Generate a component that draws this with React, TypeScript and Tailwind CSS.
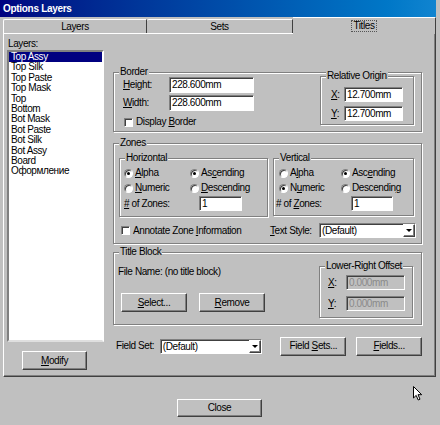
import type { ReactNode } from 'react';

const font = "font-['Liberation_Sans',Arial,sans-serif] text-[10px] tracking-[-0.4px] leading-[12px] text-black";
const sunken = 'border border-t-[#808080] border-l-[#808080] border-r-white border-b-white shadow-[inset_1px_1px_0_#404040]';
const raised = 'border border-t-white border-l-white border-r-[#404040] border-b-[#404040] shadow-[inset_-1px_-1px_0_#808080]';

const layers = ['Top Assy', 'Top Silk', 'Top Paste', 'Top Mask', 'Top', 'Bottom', 'Bot Mask', 'Bot Paste', 'Bot Silk', 'Bot Assy', 'Board', 'Оформление'];

function U({ children }: { children: ReactNode }) {
  return <span className="underline underline-offset-[1px]">{children}</span>;
}

function Group({ label, className, children }: { label: string; className?: string; children?: ReactNode }) {
  return (
    <div className={`relative border border-[#808080] shadow-[1px_1px_0_#fff,inset_1px_1px_0_#fff] ${className ?? ''}`}>
      <span className="absolute -top-[7px] left-[5px] bg-[#c0c0c0] px-[1px]">{label}</span>
      {children}
    </div>
  );
}

function Field({ value, className, disabled }: { value: string; className?: string; disabled?: boolean }) {
  return (
    <div className={`flex items-center pl-[2px] ${sunken} ${disabled ? 'bg-[#c0c0c0] text-[#8a8a8a]' : 'bg-white'} ${className ?? ''}`}>
      {value}
    </div>
  );
}

function Btn({ children, className }: { children: ReactNode; className?: string }) {
  return (
    <div className={`flex items-center justify-center bg-[#c0c0c0] ${raised} ${className ?? ''}`}>
      <span>{children}</span>
    </div>
  );
}

function Combo({ value, className }: { value: string; className?: string }) {
  return (
    <div className={`flex h-[15px] bg-white ${sunken} ${className ?? ''}`}>
      <span className="flex-1 pl-[2px] leading-[13px]">{value}</span>
      <div className={`w-[12px] h-[13px] flex items-center justify-center ${raised}`}>
        <div className="w-0 h-0 border-l-[3px] border-r-[3px] border-t-[3px] border-l-transparent border-r-transparent border-t-black" />
      </div>
    </div>
  );
}

function Radio({ checked, children, className }: { checked?: boolean; children: ReactNode; className?: string }) {
  return (
    <div className={`flex items-center h-[10px] ${className ?? ''}`}>
      <div className={`w-[9px] h-[9px] rounded-full bg-white flex items-center justify-center ${sunken}`}>
        {checked && <div className="w-[3px] h-[3px] rounded-full bg-black" />}
      </div>
      <span className="ml-[2px]">{children}</span>
    </div>
  );
}

function Check({ children, className }: { children: ReactNode; className?: string }) {
  return (
    <div className={`flex items-center h-[10px] ${className ?? ''}`}>
      <div className={`w-[9px] h-[9px] bg-white ${sunken}`} />
      <span className="ml-[3px]">{children}</span>
    </div>
  );
}

export default function App() {
  return (
    <div className={`w-[440px] h-[425px] bg-[#c0c0c0] relative overflow-hidden ${font}`}>
      {/* Title bar */}
      <div className="h-[17px] w-[436px] bg-gradient-to-r from-[#000080] to-[#1084d0] flex items-center pl-[3px] text-white font-bold tracking-[-0.3px]">
        Options Layers
      </div>

      <div className="pl-[3px]">
        {/* Tabs */}
        <div className="flex h-[16px] items-end">
          <div className="w-[144px] h-[14px] flex items-center justify-center rounded-tl-[2px] border-t border-l border-r border-t-white border-l-white border-r-[#404040]">
            Layers
          </div>
          <div className="w-[146px] h-[14px] flex items-center justify-center rounded-tl-[2px] border-t border-r border-t-white border-r-[#404040]">
            Sets
          </div>
          <div className="relative z-10 -mb-px w-[143px] h-[17px] bg-[#c0c0c0] flex items-center justify-center border-t border-r border-t-white border-r-[#404040]">
            <span className="border border-dotted border-[#555] px-[1px] leading-[10px]">Titles</span>
          </div>
        </div>

        {/* Panel */}
        <div className="w-[433px] h-[344px] border border-t-white border-l-white border-r-[#404040] border-b-[#404040] shadow-[inset_-1px_-1px_0_#808080] flex pl-[3px] pt-[4px]">
          {/* Left column */}
          <div className="w-[97px] flex flex-col">
            <div className="h-[12px] pl-[1px]">Layers:</div>
            <div className="h-[292px] bg-white border-2 border-t-[#808080] border-l-[#808080] border-r-white border-b-[#dfdfdf] flex flex-col">
              {layers.map((l, i) => (
                <div key={l} className={`h-[10.4px] leading-[10.4px] pl-[2px] ${i === 0 ? 'bg-[#000080] text-white' : ''}`}>
                  {l}
                </div>
              ))}
            </div>
            <Btn className="mt-[9px] ml-[15px] w-[65px] h-[19px]">
              <U>M</U>odify
            </Btn>
          </div>

          {/* Right column */}
          <div className="ml-[9px] w-[309px] pt-[34px] flex flex-col">
            {/* Border */}
            <Group label="Border" className="h-[60px] flex justify-between">
              <div className="pl-[9px] pt-[4px] flex flex-col">
                <div className="flex items-center">
                  <span className="w-[46px]"><U>H</U>eight:</span>
                  <Field value="228.600mm" className="w-[85px] h-[16px]" />
                </div>
                <div className="flex items-center mt-[2px]">
                  <span className="w-[46px]"><U>W</U>idth:</span>
                  <Field value="228.600mm" className="w-[85px] h-[16px]" />
                </div>
                <Check className="mt-[6px] pl-[1px]">
                  Display <U>B</U>order
                </Check>
              </div>
              <Group label="Relative Origin" className="mt-[3px] mr-[7px] w-[94px] h-[49px] pt-[10px] pl-[10px] flex flex-col gap-[4px]">
                <div className="flex items-center">
                  <span className="w-[13px]"><U>X</U>:</span>
                  <Field value="12.700mm" className="w-[59px] h-[15px]" />
                </div>
                <div className="flex items-center">
                  <span className="w-[13px]"><U>Y</U>:</span>
                  <Field value="12.700mm" className="w-[59px] h-[15px]" />
                </div>
              </Group>
            </Group>

            {/* Zones */}
            <Group label="Zones" className="mt-[11px] h-[101px] flex flex-col">
              <div className="flex mt-[14px] pl-[5px] gap-[5px]">
                <Group label="Horizontal" className="w-[149px] h-[59px] pt-[9px] pl-[4px] flex flex-col">
                  <div className="flex">
                    <Radio checked className="w-[66px]"><U>A</U>lpha</Radio>
                    <Radio checked>As<U>c</U>ending</Radio>
                  </div>
                  <div className="flex mt-[5px]">
                    <Radio className="w-[66px]"><U>N</U>umeric</Radio>
                    <Radio><U>D</U>escending</Radio>
                  </div>
                  <div className="flex items-center mt-[3px]">
                    <span className="w-[75px]"><U>#</U> of Zones:</span>
                    <Field value="1" className="w-[43px] h-[15px]" />
                  </div>
                </Group>
                <Group label="Vertical" className="w-[141px] h-[58px] pt-[9px] pl-[5px] flex flex-col">
                  <div className="flex">
                    <Radio className="w-[62px]">A<U>l</U>pha</Radio>
                    <Radio checked>Asc<U>e</U>nding</Radio>
                  </div>
                  <div className="flex mt-[5px]">
                    <Radio checked className="w-[62px]">N<U>u</U>meric</Radio>
                    <Radio>Descendin<U>g</U></Radio>
                  </div>
                  <div className="flex items-center mt-[3px] -ml-[3px]">
                    <span className="w-[75px]"># of <U>Z</U>ones:</span>
                    <Field value="1" className="w-[42px] h-[15px]" />
                  </div>
                </Group>
              </div>
              <div className="flex items-center mt-[6px] pl-[7px] pr-[5px] h-[15px]">
                <Check>
                  Annotate Zone <U>I</U>nformation
                </Check>
                <span className="ml-auto w-[49px]"><U>T</U>ext Style:</span>
                <Combo value="(Default)" className="w-[97px]" />
              </div>
            </Group>

            {/* Title Block */}
            <Group label="Title Block" className="mt-[8px] h-[73px] flex">
              <div className="pl-[4px] pt-[13px] flex flex-col">
                <div className="h-[12px]">File Name: (no title block)</div>
                <div className="flex mt-[15px] pl-[3px] gap-[12px]">
                  <Btn className="w-[66px] h-[19px]">
                    <U>S</U>elect...
                  </Btn>
                  <Btn className="w-[66px] h-[19px]">
                    <U>R</U>emove
                  </Btn>
                </div>
              </div>
              <Group label="Lower-Right Offset" className="ml-auto mr-[8px] mt-[13px] w-[94px] h-[52px] pt-[8px] pl-[8px] flex flex-col gap-[6px]">
                <div className="flex items-center">
                  <span className="w-[18px]"><U>X</U>:</span>
                  <Field value="0.000mm" disabled className="w-[59px] h-[15px]" />
                </div>
                <div className="flex items-center">
                  <span className="w-[18px]"><U>Y</U>:</span>
                  <Field value="0.000mm" disabled className="w-[59px] h-[15px]" />
                </div>
              </Group>
            </Group>

            {/* Field set row */}
            <div className="flex items-center mt-[11px] h-[20px]">
              <span className="ml-[3px] w-[44px]">Field Set:</span>
              <Combo value="(Default)" className="w-[103px]" />
              <Btn className="ml-[18px] w-[66px] h-[19px]">
                Field <U>S</U>ets...
              </Btn>
              <Btn className="ml-[10px] w-[66px] h-[19px]">
                <U>F</U>ields...
              </Btn>
            </div>
          </div>
        </div>

        {/* Bottom */}
        <Btn className="mt-[22px] ml-[174px] w-[85px] h-[18px]">Close</Btn>
      </div>

      {/* Mouse pointer */}
      <svg className="absolute left-[413px] top-[386px]" width="10" height="16" viewBox="0 0 10 16">
        <path d="M0.5 0.5 L0.5 12 L3.2 9.4 L5.2 14 L7 13.2 L5 8.7 L8.7 8.7 Z" fill="#fff" stroke="#000" strokeWidth="1" />
      </svg>
    </div>
  );
}
